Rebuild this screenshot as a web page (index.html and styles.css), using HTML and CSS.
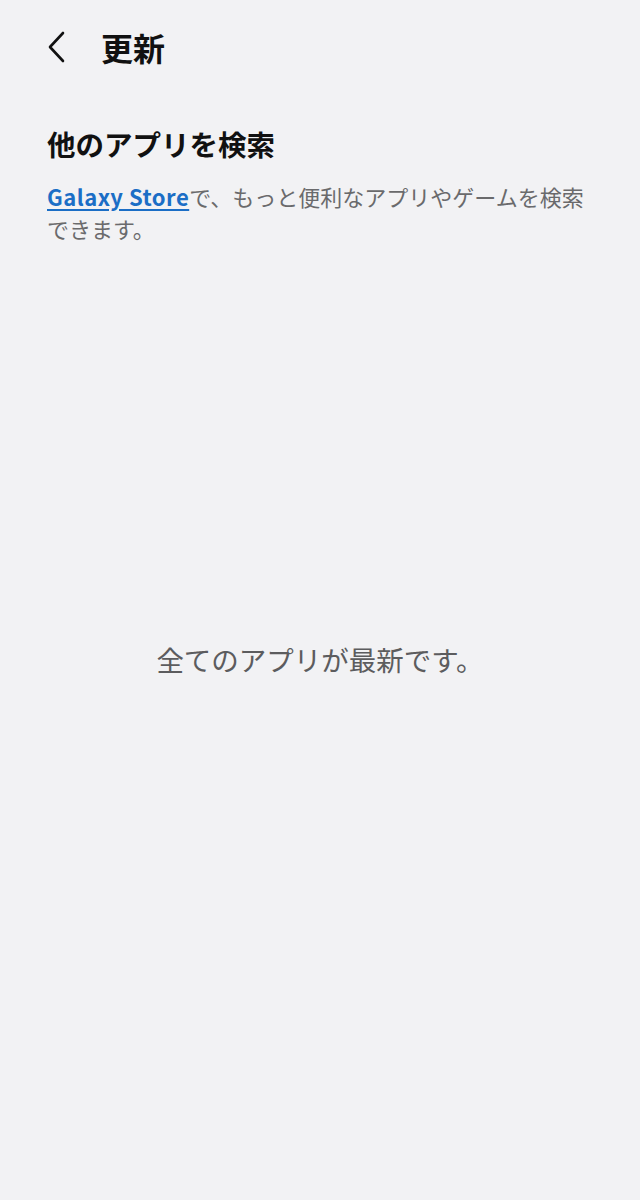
FILE: index.html
```html
<!DOCTYPE html>
<html lang="ja">
<head>
    <meta charset="UTF-8">
    <title>更新</title>
    <link rel="stylesheet" href="styles.css">
</head>
<body>
    <div class="header">
        <button class="back-btn" aria-label="戻る">
            <svg width="22" height="34" viewBox="0 0 22 34">
                <path d="M17 3 L4 17 L17 31" fill="none" stroke="#111" stroke-width="2.6" stroke-linecap="round" stroke-linejoin="round"/>
            </svg>
        </button>
        <h1 class="title">更新</h1>
    </div>

    <div class="section">
        <h2 class="section-title">他のアプリを検索</h2>
        <p class="section-text"><a href="#" class="store-link">Galaxy Store</a>で、もっと便利なアプリやゲームを検索できます。</p>
    </div>

    <div class="empty">全てのアプリが最新です。</div>
</body>
</html>
```

FILE: styles.css
```css
body {
    margin: 0;
    background: #f2f2f4;
    font-family: "Noto Sans CJK JP", "Noto Sans", sans-serif;
    color: #111;
    min-height: 1200px;
}

.header {
    display: flex;
    align-items: center;
    height: 94px;
    padding-left: 46px;
}

.back-btn {
    background: none;
    border: none;
    padding: 0;
    width: 22px;
    height: 34px;
    cursor: pointer;
}

.title {
    margin: 0 0 0 33px;
    font-size: 32px;
    font-weight: 700;
    line-height: 1;
    color: #111;
}

.section {
    padding: 30px 47px 0;
}

.section-title {
    margin: 0;
    font-size: 28.5px;
    font-weight: 700;
    line-height: 40px;
    color: #111;
}

.section-text {
    margin: 16px 0 0;
    font-size: 22px;
    line-height: 32px;
    color: #6a6a6c;
}

.store-link {
    color: #1b6ec6;
    font-weight: 700;
    letter-spacing: 0.5px;
    text-decoration: underline;
    text-underline-offset: 3px;
}

.empty {
    margin-top: 396px;
    text-align: center;
    font-size: 27.5px;
    line-height: 38px;
    color: #5c5c5e;
}
```
